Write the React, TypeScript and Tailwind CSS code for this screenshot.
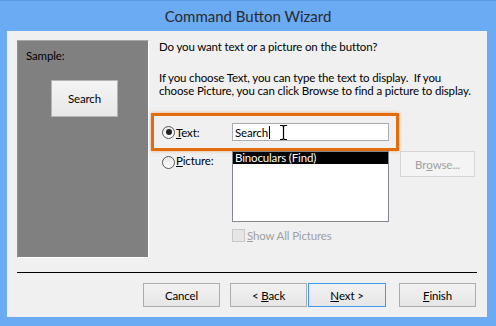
import React from "react";

const font = "font-['Lato',sans-serif]";

function Radio({ checked }: { checked?: boolean }) {
  return (
    <span className="flex h-[13px] w-[13px] shrink-0 items-center justify-center rounded-full border border-[#5a5a5a] bg-gradient-to-b from-[#e8e8e8] to-[#ffffff]">
      {checked && <span className="h-[6px] w-[6px] rounded-full bg-[#222]" />}
    </span>
  );
}

function WizardButton({
  children,
  focused,
  className = "",
}: {
  children: React.ReactNode;
  focused?: boolean;
  className?: string;
}) {
  return (
    <button
      type="button"
      className={`flex h-[24px] items-center justify-center border bg-gradient-to-b from-[#f2f2f2] to-[#e6e6e6] text-black ${
        focused ? "border-[#3c9bf0]" : "border-[#adadad]"
      } ${className}`}
    >
      {children}
    </button>
  );
}

function IBeam() {
  return (
    <svg width="9" height="17" viewBox="0 0 9 17" className="shrink-0">
      <path d="M1 1.5h2.5L4.5 2.5L5.5 1.5H8M4.5 2.5v12M1 15.5h2.5L4.5 14.5L5.5 15.5H8" fill="none" stroke="#000" strokeWidth="1.2" />
    </svg>
  );
}

export default function App() {
  return (
    <div className={`flex h-[326px] w-[496px] flex-col bg-[#6aabf3] ${font}`}>
      <div className="flex h-[31px] items-center justify-center border-t border-[#5b9be0] text-[15px] text-[#2a2a2a]">
        Command Button Wizard
      </div>

      <div className="ml-[7px] flex h-[286px] w-[480px] flex-col bg-[#f0f0f0] text-[11.5px] leading-[13px] tracking-[-0.15px] text-black">
        <div className="ml-[10px] mt-[9px] flex">
          {/* sample preview */}
          <div className="flex h-[218px] w-[132px] shrink-0 flex-col border-l border-t border-r border-b border-l-[#909090] border-t-[#a8a8a8] border-r-white border-b-white bg-[#808080]">
            <p className="ml-[8px] mt-[8px]">Sample:</p>
            <div className="ml-[33px] mt-[18px] flex h-[37px] w-[67px] items-center justify-center border border-[#b5b5b5] bg-gradient-to-b from-[#f4f4f4] to-[#e8e8e8]">
              Search
            </div>
          </div>

          <div className="ml-[10px] flex w-[320px] flex-col">
            <p>Do you want text or a picture on the button?</p>
            <p className="mt-[18px] whitespace-nowrap">
              If you choose Text, you can type the text to display.&nbsp; If you
              <br />
              choose Picture, you can click Browse to find a picture to display.
            </p>

            <div className="-ml-[8px] mt-[16px] flex h-[38px] w-[248px] items-center border-[3px] border-[#e46c0a] shadow-[0_0_3px_rgba(228,108,10,0.5)]">
              <div className="ml-[8px] flex w-[70px] items-center gap-[1px]">
                <Radio checked />
                <span>
                  <span className="underline underline-offset-1">T</span>ext:
                </span>
              </div>
              <div className="flex h-[18px] w-[157px] items-center border border-[#abadb3] bg-white pl-[2px]">
                <span>Search</span>
                <span className="ml-[1px] h-[13px] w-px bg-black" />
                <span className="ml-[9px]">
                  <IBeam />
                </span>
              </div>
            </div>

            <div className="flex">
              <div className="ml-[3px] mt-[5px] flex w-[70px] items-start gap-[1px]">
                <Radio />
                <span className="-mt-[2px]">
                  <span className="underline underline-offset-1">P</span>icture:
                </span>
              </div>
              <div className="flex flex-col">
                <div className="h-[71px] w-[157px] border border-[#828790] bg-white">
                  <div className="h-[12px] bg-black pl-[2px] leading-[12px] text-white">Binoculars (Find)</div>
                </div>
                <div className="mt-[7px] flex items-center gap-[2px] text-[#a0a0a0]">
                  <span className="h-[13px] w-[13px] border border-[#c8c8c8] bg-[#e6e6e6]" />
                  <span>
                    <span className="underline underline-offset-1">S</span>how All Pictures
                  </span>
                </div>
              </div>
              <div className="ml-[11px] flex h-[26px] w-[75px] items-center justify-center border border-[#d5d5d5] bg-[#f4f4f4] text-[#a0a0a0]">
                Br<span className="underline underline-offset-1">o</span>wse...
              </div>
            </div>
          </div>
        </div>

        <div className="ml-[10px] mt-[14px] h-px w-[460px] bg-black" />

        <div className="mt-[10px] flex">
          <WizardButton className="ml-[136px] w-[77px]">Cancel</WizardButton>
          <WizardButton className="ml-[10px] w-[77px]">
            &lt;&nbsp;<span className="underline underline-offset-1">B</span>ack
          </WizardButton>
          <WizardButton focused className="ml-px w-[78px]">
            <span className="underline underline-offset-1">N</span>ext &gt;
          </WizardButton>
          <WizardButton className="ml-[13px] w-[77px]">
            <span className="underline underline-offset-1">F</span>inish
          </WizardButton>
        </div>
      </div>
    </div>
  );
}
